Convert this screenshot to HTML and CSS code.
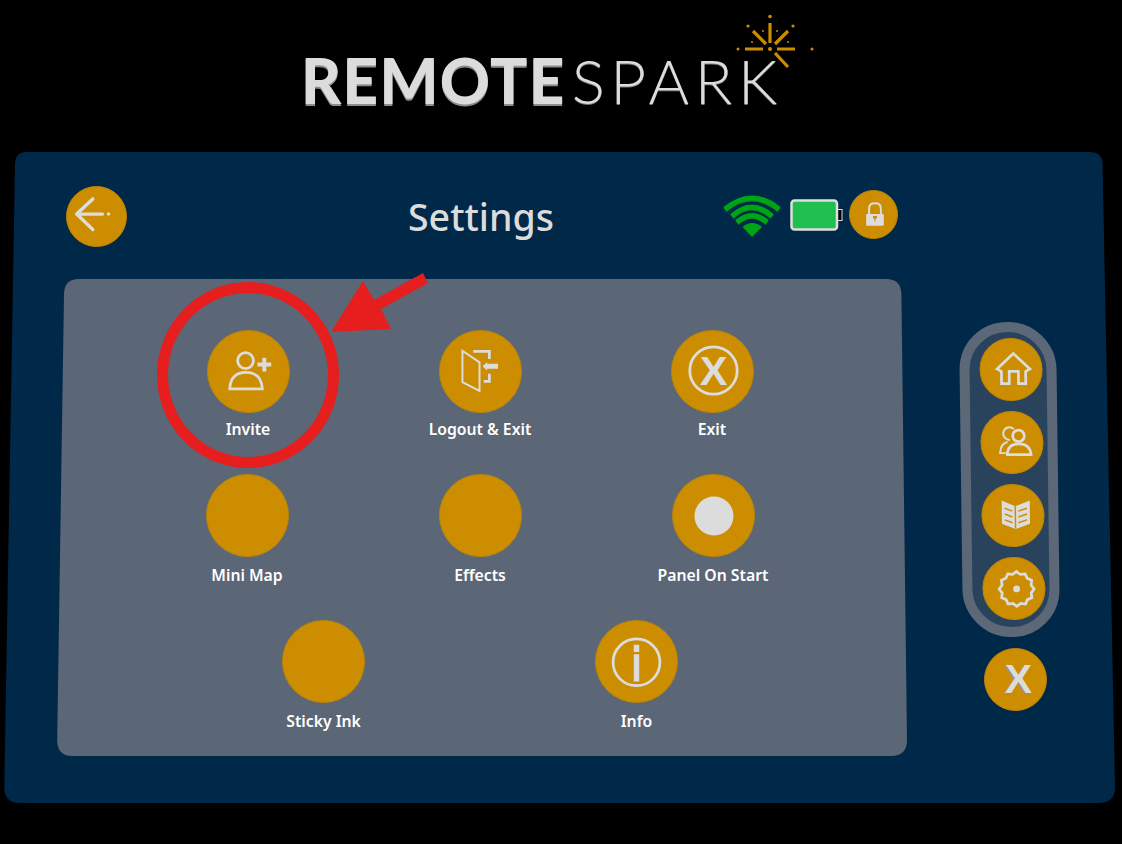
FILE: index.html
```html
<!DOCTYPE html>
<html lang="en">
<head>
    <meta charset="UTF-8">
    <meta name="viewport" content="width=device-width, initial-scale=1.0">
    <title>RemoteSpark Settings</title>
    <link rel="stylesheet" href="styles.css">
</head>
<body>
    <!-- logo -->
    <header class="logo">
        <div class="logo-text"><span class="logo-bold">REMOTE</span><span class="logo-thin">SPARK</span></div>
        <svg class="logo-spark" viewBox="0 0 80 60">
            <g class="spark-rays">
                <path d="M40 13V33M23 21L36 34M58 21L45 34M15 39H33M47 39H65M45 43L58 57"/>
            </g>
            <g class="spark-dots">
                <circle cx="40" cy="6.5" r="1.8"/><circle cx="40" cy="39" r="2"/>
                <circle cx="8" cy="39" r="1.5"/><circle cx="82" cy="39" r="1.5"/>
                <circle cx="18" cy="16" r="1.6"/><circle cx="63" cy="16" r="1.6"/>
                <circle cx="33" cy="21" r="1"/><circle cx="47" cy="21" r="1"/>
                <circle cx="22" cy="32" r="1"/><circle cx="58" cy="32" r="1"/>
            </g>
        </svg>
    </header>

    <!-- main panel -->
    <main class="panel">
        <svg class="panel-bg" viewBox="0 0 1111 651">
            <path d="M23 0H1086Q1098 0 1098.5 12L1111 635Q1111 651 1095 651H16Q0 651 0.3 635L11 12Q11.3 0 23 0Z"/>
        </svg>

        <div class="panel-top">
            <button class="btn btn-back">
                <svg viewBox="0 0 61 61">
                    <path class="line round" d="M26.7 12.3L10 28L26.7 44M10 28H36.7"/>
                    <circle class="solid" cx="43" cy="28" r="1.8"/>
                </svg>
            </button>
            <h1 class="panel-title">Settings</h1>
            <div class="status">
                <svg class="status-wifi" viewBox="0 0 58 42">
                    <g class="wifi-shadow">
                        <path d="M2 15Q29 -7 56 15M9 22Q29 4 49 22M14 28Q29 15 44 28"/>
                    </g>
                    <g class="wifi-arcs">
                        <path d="M2 14Q29 -8 56 14M9 21Q29 3 49 21M14 27Q29 14 44 27"/>
                    </g>
                    <path class="wifi-wedge" d="M19.5 32Q29 24 39 32L29 42Z"/>
                </svg>
                <svg class="status-battery" viewBox="0 0 54 33">
                    <rect class="battery-nub" x="47.5" y="10.5" width="4.5" height="11"/>
                    <rect class="battery-body" x="1.5" y="1.5" width="45.5" height="29" rx="3"/>
                </svg>
                <button class="btn btn-lock">
                    <svg viewBox="0 0 48 48">
                        <path class="line fine" d="M19.5 24V17.5Q19.5 12.5 25.5 12.5Q31.5 12.5 31.5 17.5V24"/>
                        <rect class="solid" x="16.5" y="23.5" width="18" height="12" rx="1"/>
                        <path class="keyhole" d="M23.5 25.5H27.5V27.5L26 28.5V31.5H25V28.5L23.5 27.5Z"/>
                    </svg>
                </button>
            </div>
        </div>

        <div class="panel-main">
            <section class="settings">
                <svg class="settings-bg" viewBox="0 0 850 477">
                    <path d="M22 0H829Q844 0 844.4 15L850 461Q850 477 834 477H16Q0 477 0.2 461L7 15Q7.3 0 22 0Z"/>
                </svg>

                <div class="row row-first">
                    <div class="item">
                        <button class="btn btn-lg">
                            <svg viewBox="0 0 82 82">
                                <circle class="line thin" cx="38" cy="30" r="8"/>
                                <path class="line thin" d="M22 58.5Q23 42 38.5 42Q54 42 55 58.5Z"/>
                                <path class="line plus" d="M50 34H64M57 27V41"/>
                            </svg>
                        </button>
                        <span class="item-label">Invite</span>
                    </div>
                    <div class="item">
                        <button class="btn btn-lg">
                            <svg viewBox="0 0 82 82">
                                <path class="line fine" d="M22.7 20L40 31.7V60.7L22.7 51.7Z"/>
                                <path class="line thin" d="M33.7 20.7H50V28.3M50 43.3V51H44.3"/>
                                <path class="solid" d="M43 35.7L47.7 31.7V33.2H58.7V38.2H47.7V40Z"/>
                            </svg>
                        </button>
                        <span class="item-label">Logout &amp; Exit</span>
                    </div>
                    <div class="item">
                        <button class="btn btn-lg">
                            <svg viewBox="0 0 82 82">
                                <circle class="line thin" cx="42" cy="40" r="24"/>
                                <text class="icon-x" x="42" y="55" text-anchor="middle">X</text>
                            </svg>
                        </button>
                        <span class="item-label">Exit</span>
                    </div>
                </div>

                <div class="row row-second">
                    <div class="item">
                        <button class="btn btn-lg"></button>
                        <span class="item-label">Mini Map</span>
                    </div>
                    <div class="item">
                        <button class="btn btn-lg"></button>
                        <span class="item-label">Effects</span>
                    </div>
                    <div class="item">
                        <button class="btn btn-lg">
                            <svg viewBox="0 0 83 83">
                                <circle class="solid" cx="42" cy="42" r="20"/>
                            </svg>
                        </button>
                        <span class="item-label">Panel On Start</span>
                    </div>
                </div>

                <div class="row row-third">
                    <div class="item">
                        <button class="btn btn-lg"></button>
                        <span class="item-label">Sticky Ink</span>
                    </div>
                    <div class="item">
                        <button class="btn btn-lg">
                            <svg viewBox="0 0 83 83">
                                <circle class="line thin" cx="41.5" cy="42.3" r="24"/>
                                <path class="solid" d="M38.7 24.3H44.3V31.7H38.7ZM38.7 34H44.3V62H38.7Z"/>
                            </svg>
                        </button>
                        <span class="item-label">Info</span>
                    </div>
                </div>
            </section>

            <!-- side dock -->
            <aside class="side">
                <nav class="dock">
                    <button class="btn btn-dock">
                        <svg viewBox="0 0 63 63">
                            <path class="line thin" d="M34 15L17 31L21.5 33.5V46H29.5V33.5H39V46H46.5V33.5L51 31Z"/>
                        </svg>
                    </button>
                    <button class="btn btn-dock">
                        <svg viewBox="0 0 63 63">
                            <path class="line fine" d="M33.6 17.7A6.5 6.5 0 1 0 29.5 28.8M27 31Q20 32 19 42.5H25"/>
                            <circle class="line thin" cx="38.3" cy="24.7" r="6"/>
                            <path class="line thin" d="M26.5 44Q27 33 38.5 33Q50 33 51 44Z"/>
                        </svg>
                    </button>
                    <button class="btn btn-dock">
                        <svg viewBox="0 0 63 63">
                            <path class="solid" d="M20 16L34 22L49 16V40L34 45.5L20 40Z"/>
                            <path class="book-lines" d="M34 22V45M23 24L31 27M23 30L31 33M23 36L31 39M46 24L37 27M46 30L37 33M46 36L37 39"/>
                        </svg>
                    </button>
                    <button class="btn btn-dock">
                        <svg viewBox="-31.5 -31.5 63 63">
                            <g class="gear">
                                <polygon class="line thin" points="18,0 15,4 15.6,9 11,11 9,15.6 4,15 0,18 -4,15 -9,15.6 -11,11 -15.6,9 -15,4 -18,0 -15,-4 -15.6,-9 -11,-11 -9,-15.6 -4,-15 0,-18 4,-15 9,-15.6 11,-11 15.6,-9 15,-4"/>
                                <circle class="solid" r="3.5"/>
                            </g>
                        </svg>
                    </button>
                </nav>
                <button class="btn btn-dock btn-close">X</button>
            </aside>
        </div>
    </main>

    <!-- red callout over Invite -->
    <svg class="callout" viewBox="0 0 1122 844">
        <ellipse cx="248" cy="375" rx="85.5" ry="87.5"/>
        <path class="callout-arrow" d="M331 332L363 281L374 300L423 273L428 283L381 309L391 329Z"/>
    </svg>
</body>
</html>
```

FILE: styles.css
```css
/* base */
* {
    box-sizing: border-box;
}

body {
    margin: 0;
    width: 1122px;
    height: 844px;
    position: relative;
    overflow: hidden;
    background: #000000;
    font-family: "Noto Sans", "Open Sans", sans-serif;
    color: #ffffff;
}

/* logo */
.logo {
    position: relative;
    height: 152px;
    padding: 42px 0 0 301px;
}

.logo-text {
    display: flex;
    align-items: baseline;
    font-family: Lato, sans-serif;
    font-size: 62px;
    line-height: 76px;
    color: #dcdcdc;
}

.logo-bold {
    font-weight: 900;
    letter-spacing: 1.3px;
    text-shadow: 0 2px 0 #8c8c8c;
}

.logo-thin {
    margin-left: 6px;
    font-weight: 300;
    letter-spacing: 5.5px;
    text-shadow: 0 1px 0 #777777;
}

.logo-spark {
    position: absolute;
    left: 730px;
    top: 10px;
    width: 80px;
    height: 60px;
    overflow: visible;
}

.spark-rays path {
    fill: none;
    stroke: #cc8e00;
    stroke-width: 3.2;
}

.spark-dots {
    fill: #cc8e00;
}

/* panel */
.panel {
    position: relative;
    width: 1111px;
    height: 651px;
    margin-left: 4px;
    padding-top: 34px;
}

.panel-bg,
.settings-bg {
    position: absolute;
    left: 0;
    top: 0;
    width: 100%;
    height: 100%;
}

.panel-bg path {
    fill: #002849;
}

.settings-bg path {
    fill: #5b6677;
}

.panel-top {
    position: relative;
    display: flex;
    align-items: flex-start;
    height: 61px;
    padding-left: 62px;
}

.panel-title {
    margin: 0 0 0 281px;
    font-size: 37.5px;
    font-weight: 500;
    line-height: 62px;
    color: #dcdcdc;
}

.status {
    display: flex;
    align-items: flex-start;
    margin-left: auto;
    margin-right: 217px;
    padding-top: 4px;
}

.status-wifi {
    width: 58px;
    height: 42px;
    margin-top: 5px;
    overflow: visible;
}

.wifi-arcs path,
.wifi-shadow path {
    fill: none;
    stroke: #00a515;
    stroke-width: 5;
}

.wifi-shadow path {
    stroke: #008a1c;
}

.wifi-wedge {
    fill: #00a515;
}

.status-battery {
    width: 54px;
    height: 33px;
    margin: 9px 5px 0 9px;
}

.battery-body {
    fill: #1fbf50;
    stroke: #dedede;
    stroke-width: 2.5;
}

.battery-nub {
    fill: #000000;
    stroke: #dedede;
    stroke-width: 1;
}

/* buttons */
.btn {
    display: block;
    flex: none;
    padding: 0;
    border: 1px solid #bd8507;
    border-radius: 50%;
    background: #cc8e00;
}

.btn svg {
    display: block;
    width: 100%;
    height: 100%;
    overflow: visible;
}

.btn-back {
    width: 61px;
    height: 61px;
}

.btn-lock {
    width: 49px;
    height: 49px;
}

.btn-lg {
    width: 83px;
    height: 83px;
}

.btn-dock {
    width: 63px;
    height: 63px;
}

/* icon strokes */
.line {
    fill: none;
    stroke: #dcdcdc;
    stroke-width: 3.5;
}

.line.thin {
    stroke-width: 2.8;
}

.line.fine {
    stroke-width: 2;
}

.line.round {
    stroke-linecap: round;
    stroke-linejoin: round;
}

.line.plus {
    stroke-width: 4;
}

.solid {
    fill: #dcdcdc;
}

.keyhole {
    fill: #cc8e00;
}

.icon-x {
    font-family: "Liberation Sans", sans-serif;
    font-size: 42px;
    font-weight: 700;
    fill: #dcdcdc;
}

.book-lines {
    fill: none;
    stroke: #cc8e00;
    stroke-width: 1.5;
}

.gear {
    transform: translate(2.8px, 0.5px);
}

/* settings grid */
.panel-main {
    position: relative;
    display: flex;
    align-items: flex-start;
    margin-top: 32px;
    padding-left: 53px;
}

.settings {
    position: relative;
    width: 850px;
    height: 477px;
    padding: 51px 4px 0 0;
}

.row {
    position: relative;
    display: flex;
    justify-content: center;
    height: 146px;
}

.row-first {
    height: 144px;
}

.item {
    display: flex;
    flex-direction: column;
    align-items: center;
    width: 232px;
}

.row-second .item {
    width: 233px;
}

.row-third .item {
    width: 313px;
}

.item-label {
    margin-top: 8px;
    font-size: 15.75px;
    font-weight: 600;
    line-height: 20px;
}

.row-first .item-label {
    margin-top: 6px;
}

/* side dock */
.side {
    position: relative;
    display: flex;
    flex-direction: column;
    align-items: flex-start;
    margin: 43px 0 0 54px;
}

.dock {
    display: flex;
    flex-direction: column;
    gap: 10px;
    width: 97px;
    height: 315px;
    padding: 6px 0 0 10px;
    border: 10px solid #5c6778;
    border-radius: 48px;
    background: #2a435c;
    transform: skewX(0.75deg);
}

.btn-close {
    margin: 11px 0 0 23px;
    padding-left: 6px;
    font-family: "Liberation Sans", sans-serif;
    font-size: 41px;
    font-weight: 700;
    line-height: 1;
    color: #dcdcdc;
    text-shadow: -1px 1px 0 #8c8c8c;
}

/* red callout */
.callout {
    position: absolute;
    left: 0;
    top: 0;
    width: 1122px;
    height: 844px;
    pointer-events: none;
}

.callout ellipse {
    fill: none;
    stroke: #e61e1e;
    stroke-width: 11;
}

.callout-arrow {
    fill: #e61e1e;
}
```
